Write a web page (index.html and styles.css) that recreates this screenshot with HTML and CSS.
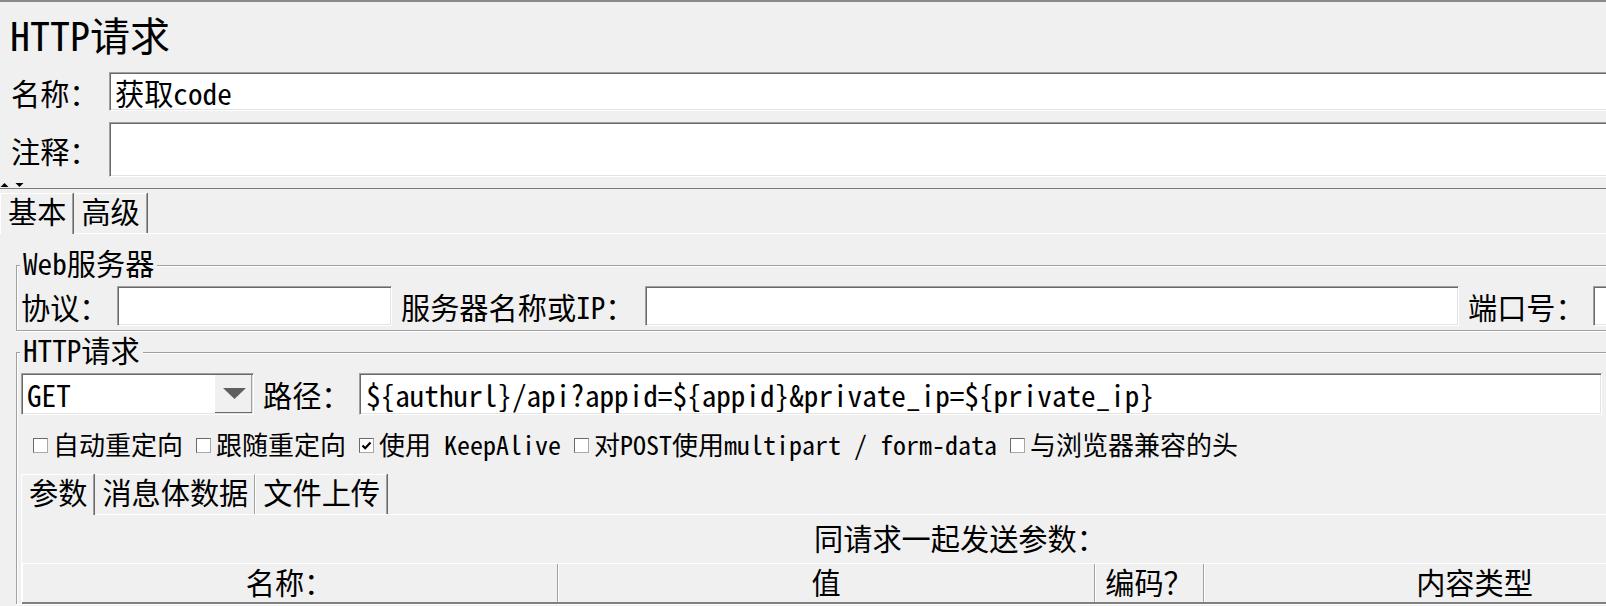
FILE: index.html
```html
<!DOCTYPE html>
<html lang="zh-CN">
<head>
<meta charset="utf-8">
<title>HTTP请求</title>
<link rel="stylesheet" href="styles.css">
</head>
<body>
<div class="page">
  <h1 class="title">HTTP请求</h1>
  <div class="meta">
    <div class="lbl">名称：</div>
    <div class="field f-name">获取code</div>
    <div class="lbl">注释：</div>
    <div class="field f-comment"></div>
  </div>
  <div class="divider">
    <svg class="arrows" width="24" height="6" viewBox="0 0 24 6"><path d="M0.5 5 L4.5 1 L8.5 5 Z" fill="#000"/><path d="M15.5 1 L23.5 1 L19.5 5 Z" fill="#000"/></svg>
  </div>
  <div class="tabs">
    <div class="tab sel">基本</div>
    <div class="tab">高级</div>
  </div>
  <div class="tabbody">
    <div class="group g-web">
      <div class="legend">Web服务器</div>
      <div class="webrow">
        <div class="lbl">协议：</div>
        <div class="field"></div>
        <div class="lbl pad">服务器名称或IP：</div>
        <div class="field"></div>
        <div class="lbl pad">端口号：</div>
        <div class="field"></div>
      </div>
    </div>
    <div class="group g-http">
      <div class="legend">HTTP请求</div>
      <div class="pathrow">
        <div class="combo">
          <div class="combo-val">GET</div>
          <div class="combo-btn"><svg width="23" height="11" viewBox="0 0 23 11"><path d="M0 0 L23 0 L11.5 11 Z" fill="#5f5f5f"/></svg></div>
        </div>
        <div class="lbl pad">路径：</div>
        <div class="field f-path">${authurl}/api?appid=${appid}&amp;private_ip=${private_ip}</div>
      </div>
      <div class="checks">
        <div class="chk"><span class="box"></span><span>自动重定向</span></div>
        <div class="chk"><span class="box"></span><span>跟随重定向</span></div>
        <div class="chk"><span class="box on"><svg width="13" height="13" viewBox="0 0 13 13"><path d="M2.5 6.5 L5.2 9.2 L10.5 3.5" fill="none" stroke="#000" stroke-width="2.2"/></svg></span><span>使用 KeepAlive</span></div>
        <div class="chk"><span class="box"></span><span>对POST使用multipart / form-data</span></div>
        <div class="chk"><span class="box"></span><span>与浏览器兼容的头</span></div>
      </div>
      <div class="subtabs">
        <div class="tab sel">参数</div>
        <div class="tab">消息体数据</div>
        <div class="tab">文件上传</div>
      </div>
      <div class="subbody">
        <div class="caption">同请求一起发送参数：</div>
        <div class="thead">
          <div class="th c1">名称：</div>
          <div class="th c2">值</div>
          <div class="th c3">编码？</div>
          <div class="th c4">内容类型</div>
        </div>
      </div>
    </div>
  </div>
</div>
</body>
</html>
```

FILE: styles.css
```css
* { box-sizing: border-box; }
html, body { margin: 0; padding: 0; }
body {
  width: 1606px;
  height: 606px;
  overflow: hidden;
  background: #f0f0f0;
  color: #000;
  font-family: "Noto Sans Mono CJK SC", "Noto Sans CJK SC", "Liberation Mono", monospace;
  font-size: 29.2px;
}
.page {
  border-top: 2px solid #8a8a8a;
  width: 1606px;
  height: 606px;
  overflow: hidden;
}
.title {
  margin: 8px 0 0 10px;
  font-size: 40px;
  line-height: 48px;
  font-weight: normal;
}
.meta {
  display: grid;
  grid-template-columns: 98px 1520px;
  row-gap: 11px;
  margin-top: 14px;
  padding-left: 11px;
  align-items: center;
}
.lbl { white-space: nowrap; line-height: 30px; }
.field {
  background: #fff;
  border-top: 1px solid #a0a0a0;
  border-left: 1px solid #a0a0a0;
  border-bottom: 1px solid #fff;
  border-right: 1px solid #fff;
  box-shadow: inset 1px 1px #696969, inset -1px -1px #e3e3e3;
  display: flex;
  align-items: center;
  padding-left: 5px;
  white-space: pre;
  overflow: hidden;
  height: 40px;
}
.f-name { height: 39px; }
.f-comment { height: 55px; }
.divider {
  height: 12px;
  border-bottom: 1px solid #7a7a7a;
  display: flex;
  align-items: flex-end;
}
.arrows { display: block; }
.tabs, .subtabs {
  display: flex;
  height: 40px;
  margin-top: 4px;
}
.tab {
  height: 40px;
  line-height: 33px;
  padding: 0 6px 0 7px;
  border-top: 1px solid #fff;
  border-left: 1px solid #fff;
  border-right: 1px solid #a0a0a0;
  box-shadow: 1px 0 #696969;
  white-space: nowrap;
}
.tab.sel {
  position: relative;
  height: 41px;
  background: #f0f0f0;
  margin-bottom: -1px;
}
.tabbody {
  border-top: 1px solid #fff;
  padding-top: 31px;
}
.group {
  position: relative;
  margin-left: 16px;
  width: 1900px;
  border: 1px solid #a0a0a0;
  box-shadow: inset 1px 1px #fff, 1px 1px #fff;
  padding: 20px 0 4px 4px;
}
.g-http {
  margin-top: 21px;
  padding-bottom: 0;
  border-bottom: none;
}
.legend {
  position: absolute;
  top: -19px;
  left: 3px;
  padding: 0 3px;
  line-height: 30px;
  background: #f0f0f0;
  white-space: nowrap;
}
.webrow {
  display: grid;
  grid-template-columns: 96px 275px 253px 814px 134px 300px;
  align-items: center;
  height: 40px;
}
.pad { padding-left: 9px; }
.pathrow {
  display: grid;
  grid-template-columns: 233px 105px 1243px;
  align-items: center;
  height: 42px;
}
.pathrow .field { height: 42px; padding-left: 6px; }
.combo {
  display: flex;
  height: 42px;
  background: #fff;
  border-top: 1px solid #a0a0a0;
  border-left: 1px solid #a0a0a0;
  border-bottom: 1px solid #fff;
  border-right: 1px solid #fff;
  box-shadow: inset 1px 1px #696969, inset -1px -1px #e3e3e3;
  padding: 1px;
}
.combo-val {
  flex: 1;
  display: flex;
  align-items: center;
  padding-left: 4px;
}
.combo-btn {
  width: 38px;
  background: #f0f0f0;
  border-left: 1px solid #fff;
  box-shadow: inset 0 -1px #696969, inset -1px 0 #a0a0a0;
  display: flex;
  align-items: center;
  justify-content: center;
  padding-left: 2px;
}
.combo-btn svg { display: block; margin-top: -2px; }
.checks {
  display: flex;
  align-items: center;
  gap: 13px;
  height: 30px;
  margin-top: 14px;
  padding-left: 12px;
  font-size: 26px;
}
.chk {
  display: flex;
  align-items: center;
  gap: 5px;
  white-space: pre;
  line-height: 30px;
}
.box {
  flex: none;
  width: 15px;
  height: 15px;
  background: #fff;
  border-top: 1px solid #6a6a6a;
  border-left: 1px solid #6a6a6a;
  border-bottom: 1px solid #a8a8a8;
  border-right: 1px solid #a8a8a8;
  display: flex;
  align-items: center;
  justify-content: center;
  margin-top: 2px;
}
.box svg { display: block; }
.subtabs { margin-top: 15px; }
.subbody {
  width: 1877px;
  border-top: 1px solid #fff;
  border-left: 1px solid #fff;
}
.caption {
  text-align: center;
  line-height: 45px;
  height: 48px;
}
.thead {
  display: flex;
  height: 41px;
  border-top: 1px solid #fff;
  border-bottom: 2px solid #808080;
}
.th {
  text-align: center;
  line-height: 35px;
  border-right: 1px solid #a0a0a0;
  box-shadow: inset 1px 0 #fff;
  white-space: nowrap;
}
.c1 { width: 536px; }
.c2 { width: 537px; }
.c3 { width: 109px; }
.c4 { width: 542px; }
```
